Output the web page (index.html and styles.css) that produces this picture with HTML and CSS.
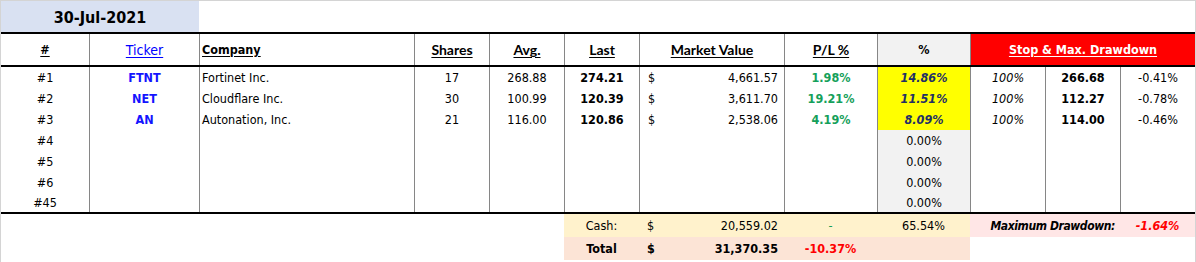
FILE: index.html
```html
<!DOCTYPE html>
<html>
<head>
<meta charset="utf-8">
<link rel="stylesheet" href="styles.css">
</head>
<body>
<div class="sheet">
  <div class="row date-row">
    <div class="date">30-Jul-2021</div>
  </div>
  <div class="rule"></div>
  <div class="row head">
    <div class="c center"><span class="u t-bold">#</span></div>
    <div class="c bl center"><span class="u ticker-h">Ticker</span></div>
    <div class="c bl left"><span class="u t-bold">Company</span></div>
    <div class="c bl center"><span class="u cal">Shares</span></div>
    <div class="c bl center"><span class="u cal">Avg.</span></div>
    <div class="c bl center"><span class="u cal">Last</span></div>
    <div class="c bl center"><span class="u cal">Market Value</span></div>
    <div class="c bl center"><span class="u cal">P/L %</span></div>
    <div class="c bl center gray"><span class="t-bold">%</span></div>
    <div class="c bl center red span3"><span class="u t-bold">Stop &amp; Max. Drawdown</span></div>
  </div>
  <div class="rule"></div>
  <div class="body">
    <div class="row data">
      <div class="c center">#1</div>
      <div class="c bl center tick">FTNT</div>
      <div class="c bl left">Fortinet Inc.</div>
      <div class="c bl center">17</div>
      <div class="c bl center">268.88</div>
      <div class="c bl center b">274.21</div>
      <div class="c bl money"><span>$</span><span>4,661.57</span></div>
      <div class="c bl center green">1.98%</div>
      <div class="c bl center yellow navy">14.86%</div>
      <div class="c bl center i">100%</div>
      <div class="c bl center b">266.68</div>
      <div class="c bl center">-0.41%</div>
    </div>
    <div class="row data">
      <div class="c center">#2</div>
      <div class="c bl center tick">NET</div>
      <div class="c bl left">Cloudflare Inc.</div>
      <div class="c bl center">30</div>
      <div class="c bl center">100.99</div>
      <div class="c bl center b">120.39</div>
      <div class="c bl money"><span>$</span><span>3,611.70</span></div>
      <div class="c bl center green">19.21%</div>
      <div class="c bl center yellow navy">11.51%</div>
      <div class="c bl center i">100%</div>
      <div class="c bl center b">112.27</div>
      <div class="c bl center">-0.78%</div>
    </div>
    <div class="row data">
      <div class="c center">#3</div>
      <div class="c bl center tick">AN</div>
      <div class="c bl left">Autonation, Inc.</div>
      <div class="c bl center">21</div>
      <div class="c bl center">116.00</div>
      <div class="c bl center b">120.86</div>
      <div class="c bl money"><span>$</span><span>2,538.06</span></div>
      <div class="c bl center green">4.19%</div>
      <div class="c bl center yellow navy">8.09%</div>
      <div class="c bl center i">100%</div>
      <div class="c bl center b">114.00</div>
      <div class="c bl center">-0.46%</div>
    </div>
    <div class="row data">
      <div class="c center">#4</div>
      <div class="c bl"></div><div class="c bl"></div><div class="c bl"></div><div class="c bl"></div><div class="c bl"></div><div class="c bl"></div><div class="c bl"></div>
      <div class="c bl center gray">0.00%</div>
      <div class="c bl"></div><div class="c bl"></div><div class="c bl"></div>
    </div>
    <div class="row data">
      <div class="c center">#5</div>
      <div class="c bl"></div><div class="c bl"></div><div class="c bl"></div><div class="c bl"></div><div class="c bl"></div><div class="c bl"></div><div class="c bl"></div>
      <div class="c bl center gray">0.00%</div>
      <div class="c bl"></div><div class="c bl"></div><div class="c bl"></div>
    </div>
    <div class="row data short">
      <div class="c center">#6</div>
      <div class="c bl"></div><div class="c bl"></div><div class="c bl"></div><div class="c bl"></div><div class="c bl"></div><div class="c bl"></div><div class="c bl"></div>
      <div class="c bl center gray">0.00%</div>
      <div class="c bl"></div><div class="c bl"></div><div class="c bl"></div>
    </div>
    <div class="row data short">
      <div class="c center">#45</div>
      <div class="c bl"></div><div class="c bl"></div><div class="c bl"></div><div class="c bl"></div><div class="c bl"></div><div class="c bl"></div><div class="c bl"></div>
      <div class="c bl center gray">0.00%</div>
      <div class="c bl"></div><div class="c bl"></div><div class="c bl"></div>
    </div>
  </div>
  <div class="rule"></div>
  <div class="row foot">
    <div class="c lead5"></div>
    <div class="c center cash">Cash:</div>
    <div class="c money cash"><span>$</span><span>20,559.02</span></div>
    <div class="c center cash green-n">-</div>
    <div class="c center cash">65.54%</div>
    <div class="c right pink span2 bi maxdd">Maximum Drawdown:</div>
    <div class="c center pink bi redtxt">-1.64%</div>
  </div>
  <div class="row foot">
    <div class="c lead5"></div>
    <div class="c center total b">Total</div>
    <div class="c money total b"><span>$</span><span>31,370.35</span></div>
    <div class="c center total b redtxt">-10.37%</div>
    <div class="c total"></div>
  </div>
</div>
</body>
</html>
```

FILE: styles.css
```css
html, body {
  margin: 0;
  padding: 0;
  background: #ffffff;
}
body {
  font-family: "DejaVu Sans Condensed", "DejaVu Sans", sans-serif;
  font-size: 12.5px;
  color: #000000;
}
.sheet {
  width: 1196px;
  height: 262px;
  box-sizing: border-box;
  border-left: 1px solid #d4d4d4;
  border-right: 1px solid #d4d4d4;
  border-top: 1px solid #d4d4d4;
  overflow: hidden;
}
.row {
  display: grid;
  grid-template-columns: 88px 110px 215px 75px 75px 75px 145px 93px 93px 75px 75px 75px;
}
.date-row {
  height: 31px;
}
.date {
  grid-column: 1 / span 2;
  background: #d9e1f2;
  font-weight: bold;
  font-size: 16px;
  display: flex;
  align-items: center;
  justify-content: center;
  padding-top: 1px;
}
.rule {
  height: 2px;
  background: #000000;
}
.head {
  height: 31px;
}
.c {
  display: flex;
  align-items: center;
  min-width: 0;
  white-space: nowrap;
  box-sizing: border-box;
}
.bl {
  border-left: 1px solid #868686;
}
.center { justify-content: center; }
.left { justify-content: flex-start; padding-left: 2px; }
.right { justify-content: flex-end; padding-right: 5px; }
.u {
  text-decoration: underline;
  text-underline-offset: 2px;
  text-decoration-thickness: 1px;
}
.t-bold { font-weight: bold; }
.ticker-h {
  color: #0000ff;
  font-size: 14px;
}
.cal {
  font-family: Lato, "Open Sans", sans-serif;
  font-weight: bold;
  font-size: 14px;
}
.gray { background: #f2f2f2; }
.red {
  background: #ff0000;
  color: #ffffff;
}
.span3 { grid-column: span 3; }
.span2 { grid-column: span 2; }
.data { height: 21px; }
.data.short { height: 20px; }
.tick {
  color: #1414ff;
  font-weight: bold;
}
.b { font-weight: bold; }
.i { font-style: italic; }
.bi { font-weight: bold; font-style: italic; }
.maxdd {
  font-size: 12px;
  letter-spacing: -0.4px;
}
.money {
  justify-content: space-between;
  padding-left: 8px;
  padding-right: 6px;
}
.green {
  color: #15a05a;
  font-weight: bold;
}
.green-n { color: #15a05a; }
.yellow { background: #ffff00; }
.navy {
  color: #1f2f66;
  font-weight: bold;
  font-style: italic;
}
.foot { height: 23px; }
.lead5 { grid-column: span 5; }
.cash { background: #fff2cc; }
.total { background: #fce4d6; }
.pink { background: #ffe6e6; }
.redtxt { color: #ff0000; }
```
